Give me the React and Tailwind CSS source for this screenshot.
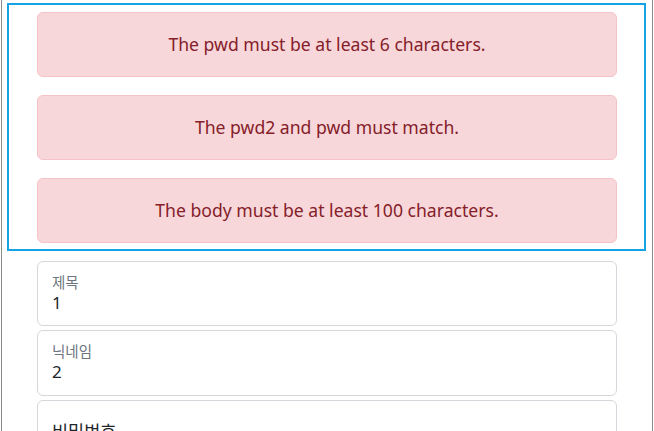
export default function App() {
  const alerts = [
    "The pwd must be at least 6 characters.",
    "The pwd2 and pwd must match.",
    "The body must be at least 100 characters.",
  ];
  return (
    <div className="relative w-[654px] h-[431px] overflow-hidden bg-white" style={{ fontFamily: '"Noto Sans", "Noto Sans CJK KR", sans-serif' }}>
      <div className="absolute left-[1px] top-0 h-full w-px bg-[#8a8a8a]" />
      <div className="absolute left-[652px] top-0 h-full w-px bg-[#8a8a8a]" />
      <div className="ml-[7px] mt-[3px] w-[639px] h-[248px] border-2 border-[#14a3e3] pt-[7px] pl-[28px]">
        <div className="flex flex-col gap-[18px] w-[580px]">
          {alerts.map((a) => (
            <div key={a} className="h-[65px] rounded-[6px] border border-[#f5c2c7] bg-[#f8d7da] text-[#842029] text-[17.6px] flex items-center justify-center">
              {a}
            </div>
          ))}
        </div>
      </div>
      <div className="ml-[37px] mt-[10px] w-[580px] flex flex-col">
        <div className="h-[65px] rounded-[6px] border border-[#d4d7db] pl-[14px] pt-[11px]">
          <div className="text-[14.5px] leading-[18px] text-[#6c757d]">제목</div>
          <div className="text-[17px] leading-[23px] text-[#212529]">1</div>
        </div>
        <div className="mt-[4px] h-[66px] rounded-[6px] border border-[#d4d7db] pl-[14px] pt-[11px]">
          <div className="text-[14.5px] leading-[18px] text-[#6c757d]">닉네임</div>
          <div className="text-[17px] leading-[23px] text-[#212529]">2</div>
        </div>
        <div className="mt-[4px] h-[66px] rounded-[6px] border border-[#d4d7db] pl-[14px] pt-[18px]">
          <div className="text-[17.5px] leading-[24px] text-[#212529]">비밀번호</div>
        </div>
      </div>
    </div>
  );
}
